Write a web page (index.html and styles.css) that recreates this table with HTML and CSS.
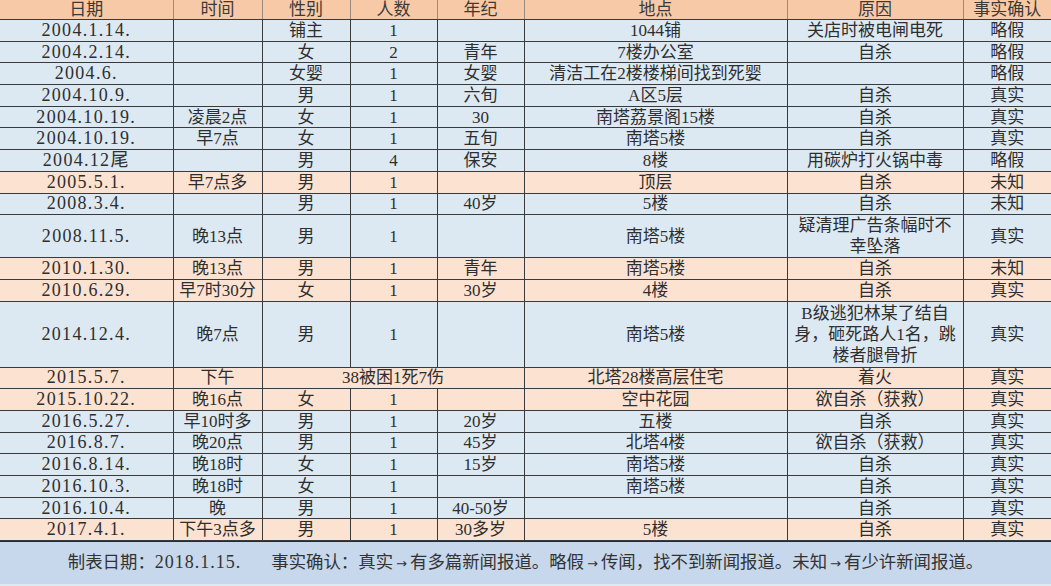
FILE: index.html
```html
<!DOCTYPE html>
<html lang="zh">
<head>
<meta charset="utf-8">
<title>事件统计表</title>
<link rel="stylesheet" href="styles.css">
</head>
<body>
<div class="sheet">
<table class="grid">
<colgroup>
<col class="c-date"><col class="c-time"><col class="c-sex"><col class="c-num"><col class="c-age"><col class="c-place"><col class="c-reason"><col class="c-fact">
</colgroup>
<thead>
<tr class="head"><th>日期</th><th>时间</th><th>性别</th><th>人数</th><th>年纪</th><th>地点</th><th>原因</th><th>事实确认</th></tr>
</thead>
<tbody>
<tr class="blue"><td class="d">2004.1.14.</td><td></td><td>铺主</td><td>1</td><td></td><td>1044铺</td><td>关店时被电闸电死</td><td>略假</td></tr>
<tr class="blue"><td class="d">2004.2.14.</td><td></td><td>女</td><td>2</td><td>青年</td><td>7楼办公室</td><td>自杀</td><td>略假</td></tr>
<tr class="blue"><td class="d">2004.6.</td><td></td><td>女婴</td><td>1</td><td>女婴</td><td>清洁工在2楼楼梯间找到死婴</td><td></td><td>略假</td></tr>
<tr class="blue"><td class="d">2004.10.9.</td><td></td><td>男</td><td>1</td><td>六旬</td><td>A区5层</td><td>自杀</td><td>真实</td></tr>
<tr class="blue"><td class="d">2004.10.19.</td><td>凌晨2点</td><td>女</td><td>1</td><td>30</td><td>南塔荔景阁15楼</td><td>自杀</td><td>真实</td></tr>
<tr class="blue"><td class="d">2004.10.19.</td><td>早7点</td><td>女</td><td>1</td><td>五旬</td><td>南塔5楼</td><td>自杀</td><td>真实</td></tr>
<tr class="blue"><td class="d">2004.12尾</td><td></td><td>男</td><td>4</td><td>保安</td><td>8楼</td><td>用碳炉打火锅中毒</td><td>略假</td></tr>
<tr class="peach"><td class="d">2005.5.1.</td><td>早7点多</td><td>男</td><td>1</td><td></td><td>顶层</td><td>自杀</td><td>未知</td></tr>
<tr class="blue"><td class="d">2008.3.4.</td><td></td><td>男</td><td>1</td><td>40岁</td><td>5楼</td><td>自杀</td><td>未知</td></tr>
<tr class="blue double"><td class="d">2008.11.5.</td><td>晚13点</td><td>男</td><td>1</td><td></td><td>南塔5楼</td><td class="wrap">疑清理广告条幅时不<br>幸坠落</td><td>真实</td></tr>
<tr class="peach"><td class="d">2010.1.30.</td><td>晚13点</td><td>男</td><td>1</td><td>青年</td><td>南塔5楼</td><td>自杀</td><td>未知</td></tr>
<tr class="peach"><td class="d">2010.6.29.</td><td>早7时30分</td><td>女</td><td>1</td><td>30岁</td><td>4楼</td><td>自杀</td><td>真实</td></tr>
<tr class="blue triple"><td class="d">2014.12.4.</td><td>晚7点</td><td>男</td><td>1</td><td></td><td>南塔5楼</td><td class="wrap">B级逃犯林某了结自<br>身，砸死路人1名，跳<br>楼者腿骨折</td><td>真实</td></tr>
<tr class="peach"><td class="d">2015.5.7.</td><td>下午</td><td colspan="3">38被困1死7伤</td><td>北塔28楼高层住宅</td><td>着火</td><td>真实</td></tr>
<tr class="peach"><td class="d">2015.10.22.</td><td>晚16点</td><td>女</td><td>1</td><td></td><td>空中花园</td><td>欲自杀（获救）</td><td>真实</td></tr>
<tr class="blue"><td class="d">2016.5.27.</td><td>早10时多</td><td>男</td><td>1</td><td>20岁</td><td>五楼</td><td>自杀</td><td>真实</td></tr>
<tr class="blue"><td class="d">2016.8.7.</td><td>晚20点</td><td>男</td><td>1</td><td>45岁</td><td>北塔4楼</td><td>欲自杀（获救）</td><td>真实</td></tr>
<tr class="blue"><td class="d">2016.8.14.</td><td>晚18时</td><td>女</td><td>1</td><td>15岁</td><td>南塔5楼</td><td>自杀</td><td>真实</td></tr>
<tr class="blue"><td class="d">2016.10.3.</td><td>晚18时</td><td>女</td><td>1</td><td></td><td>南塔5楼</td><td>自杀</td><td>真实</td></tr>
<tr class="blue"><td class="d">2016.10.4.</td><td>晚</td><td>男</td><td>1</td><td>40-50岁</td><td></td><td>自杀</td><td>真实</td></tr>
<tr class="peach"><td class="d">2017.4.1.</td><td>下午3点多</td><td>男</td><td>1</td><td>30多岁</td><td>5楼</td><td>自杀</td><td>真实</td></tr>
</tbody>
</table>
<div class="note">
<p class="note-text">制表日期：<span class="num">2018.1.15.</span><span class="gap"></span>事实确认：真实<span class="arr">→</span>有多篇新闻报道。略假<span class="arr">→</span>传闻，找不到新闻报道。未知<span class="arr">→</span>有少许新闻报道。</p>
</div>
<div class="note-edge"></div>
</div>
</body>
</html>
```
FILE: styles.css
```css
html, body {
  margin: 0;
  padding: 0;
  background: #dfe7f1;
}
.sheet {
  width: 1051px;
  height: 586px;
  overflow: hidden;
  display: flex;
  flex-direction: column;
  font-family: "Liberation Serif", "Noto Sans CJK SC", serif;
  color: #2e2e2e;
}
.grid {
  width: 1051px;
  table-layout: fixed;
  border-collapse: collapse;
  font-size: 17px;
}
.c-date { width: 173px; }
.c-time { width: 89px; }
.c-sex { width: 88px; }
.c-num { width: 87px; }
.c-age { width: 87px; }
.c-place { width: 263px; }
.c-reason { width: 176px; }
.c-fact { width: 88px; }
.grid th, .grid td {
  border: 1px solid #3a3a3a;
  padding: 0;
  text-align: center;
  vertical-align: middle;
  line-height: 19px;
  white-space: nowrap;
  overflow: hidden;
  font-weight: normal;
}
.grid tr > :first-child { border-left: none; }
.grid tr > :last-child { border-right: none; }
.grid thead th {
  border-top: none;
  border-left-color: #9a8a80;
  border-right-color: #9a8a80;
  height: 19px;
  color: #3a3a3a;
}
.head { background: #f7c9a6; }
.blue { background: #dce9f3; }
.peach { background: #fce2d1; }
.grid tbody tr { height: 21.7px; }
.grid tbody tr.double { height: 43px; }
.grid tbody tr.triple { height: 66px; }
.grid td.d { letter-spacing: 1.3px; font-size: 18px; }
.grid td.wrap { line-height: 21px; }
.note {
  height: 42px;
  background: #c7d7ec;
  display: flex;
  align-items: center;
  justify-content: center;
  border-top: 1px solid #2a2a2a;
}
.note-text {
  margin: 0;
  font-size: 17.4px;
  line-height: 20px;
  color: #333;
}
.note-text .num { letter-spacing: 1px; font-size: 18px; }
.note-text .arr {
  display: inline-block;
  width: 17px;
  text-align: center;
  font-family: "DejaVu Sans", sans-serif;
  font-size: 13px;
}
.gap { display: inline-block; width: 30px; }
.note-edge {
  flex: 1;
  background: #e0e8f2;
}
```
